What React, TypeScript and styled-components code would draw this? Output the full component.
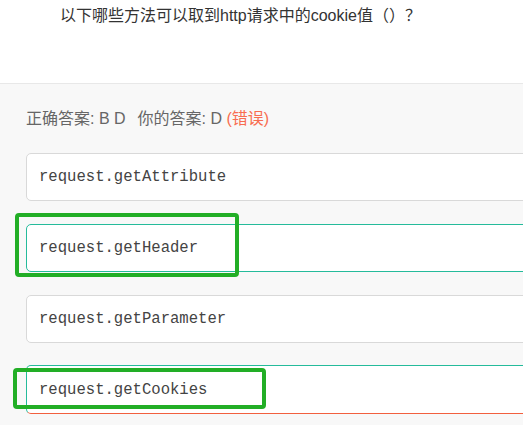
import styled, { createGlobalStyle } from 'styled-components';

const GlobalStyle = createGlobalStyle`
  html, body {
    margin: 0;
    padding: 0;
    overflow: hidden;
    background: #f8f8f8;
  }
`;

const Page = styled.div`
  position: relative;
  width: 100vw;
  height: 100vh;
  overflow: hidden;
  font-family: "Liberation Sans", Arial, "Noto Sans CJK SC", sans-serif;
`;

const QuestionHeader = styled.div`
  height: 84px;
  background: #fff;
  border-bottom: 1px solid #e8e8e8;
  box-sizing: border-box;
  padding: 4px 0 0 60px;
`;

const QuestionText = styled.div`
  font-size: 16px;
  line-height: 24px;
  color: #333;
`;

const Body = styled.div`
  padding: 23px 0 0 26px;
`;

const ResultLine = styled.div`
  font-size: 16px;
  line-height: 24px;
  color: #666;
  display: flex;
  gap: 12px;
`;

const Wrong = styled.span`
  color: #f86d50;
`;

const OptionList = styled.div`
  margin-top: 22px;
  width: 700px;
  display: flex;
  flex-direction: column;
  gap: 23px;
`;

type OptionState = 'normal' | 'correct' | 'chosen';

const borderColors: Record<OptionState, string> = {
  normal: '#d9d9d9',
  correct: '#25bb9b',
  chosen: '#25bb9b #25bb9b #f2603f #25bb9b',
};

const Option = styled.div<{ $state: OptionState }>`
  box-sizing: border-box;
  height: ${(p) => (p.$state === 'chosen' ? '49px' : '48px')};
  margin-top: ${(p) => (p.$state === 'chosen' ? '-1px' : '0')};
  display: flex;
  align-items: center;
  padding: 0 12px;
  background: #fff;
  border: 1px solid;
  border-color: ${(p) => borderColors[p.$state]};
  border-radius: 5px;
  font-family: "Liberation Mono", "Courier New", monospace;
  font-size: 15.6px;
  color: #444;
`;

const Mark = styled.div<{ $x: number; $y: number; $w: number; $h: number }>`
  position: absolute;
  left: ${(p) => p.$x}px;
  top: ${(p) => p.$y}px;
  width: ${(p) => p.$w}px;
  height: ${(p) => p.$h}px;
  box-sizing: border-box;
  border: 4px solid #22ae26;
  border-radius: 4px;
`;

const options: { text: string; state: OptionState }[] = [
  { text: 'request.getAttribute', state: 'normal' },
  { text: 'request.getHeader', state: 'correct' },
  { text: 'request.getParameter', state: 'normal' },
  { text: 'request.getCookies', state: 'chosen' },
];

export default function App() {
  return (
    <Page>
      <GlobalStyle />
      <QuestionHeader>
        <QuestionText>以下哪些方法可以取到http请求中的cookie值（）？</QuestionText>
      </QuestionHeader>
      <Body>
        <ResultLine>
          <span>正确答案: B D</span>
          <span>
            你的答案: D <Wrong>(错误)</Wrong>
          </span>
        </ResultLine>
        <OptionList>
          {options.map((o) => (
            <Option key={o.text} $state={o.state}>
              {o.text}
            </Option>
          ))}
        </OptionList>
      </Body>
      <Mark $x={15} $y={213} $w={224} $h={64} />
      <Mark $x={13} $y={368} $w={253} $h={41} />
    </Page>
  );
}
